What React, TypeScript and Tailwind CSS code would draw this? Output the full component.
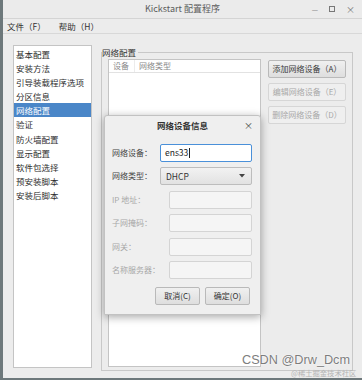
import React from "react";

const font = "font-[family-name:'Noto_Sans_CJK_SC','DejaVu_Sans',sans-serif]";

const navItems = [
  "基本配置",
  "安装方法",
  "引导装载程序选项",
  "分区信息",
  "网络配置",
  "验证",
  "防火墙配置",
  "显示配置",
  "软件包选择",
  "预安装脚本",
  "安装后脚本",
];

function SideButton({ label, disabled }: { label: string; disabled?: boolean }) {
  return (
    <div
      className={
        disabled
          ? "h-[18px] w-[78px] flex items-center justify-center rounded-[2px] border border-[#d6d6d6] bg-[#efefef] text-[#a9a9a9]"
          : "h-[18px] w-[78px] flex items-center justify-center rounded-[2px] border border-[#b9b9b9] bg-gradient-to-b from-[#f0f0f0] to-[#dedede] text-[#3a3a3a]"
      }
    >
      {label}
    </div>
  );
}

function Field({ label, w, children }: { label: string; w: string; children: React.ReactNode }) {
  return (
    <div className="flex items-center h-[18px]">
      <div className={w}>{label}</div>
      <div className="flex-1 h-full">{children}</div>
    </div>
  );
}

export default function App() {
  return (
    <div className={`relative w-[362px] h-[380px] overflow-hidden bg-[#6d787b] ${font} text-[8px] text-[#2e3436]`}>
      <div className="ml-[3px] w-[359px] h-[378px] bg-[#ececec] flex flex-col">
        {/* title bar */}
        <div className="h-[19px] shrink-0 grid grid-cols-[1fr_auto_1fr] items-center border-b border-[#d4d4d4] bg-[#ebebeb]">
          <div />
          <div className="text-[9px] text-[#5b5b5b]">Kickstart 配置程序</div>
          <div className="flex justify-end items-center gap-[11px] pr-[7px] text-[#777]">
            <span className="text-[7px] leading-none">—</span>
            <span className="w-[6px] h-[6px] border border-[#777]" />
            <span className="text-[9px] leading-none">×</span>
          </div>
        </div>
        {/* menu bar */}
        <div className="h-[15px] shrink-0 flex items-center gap-[13px] pl-[4px] border-b border-[#d8d8d8] text-[8.5px] text-[#333]">
          <span>文件（F）</span>
          <span>帮助（H）</span>
        </div>
        {/* content */}
        <div className="flex-1 flex min-h-0">
          <div className="ml-[10px] mt-[11px] w-[79px] h-[323px] border border-[#c4c4c4] bg-white py-[0.5px]">
            {navItems.map((it) => (
              <div
                key={it}
                className={
                  it === "网络配置"
                    ? "h-[14.2px] leading-[14.2px] pl-[2px] bg-[#4a86c8] text-white text-[8.5px]"
                    : "h-[14.2px] leading-[14.2px] pl-[2px] text-[8.5px] text-[#2e2e2e]"
                }
              >
                {it}
              </div>
            ))}
          </div>
          <fieldset className="ml-[9px] mt-[13px] mb-[7px] w-[247px] border border-[#c8c8c8] flex flex-col px-[6px] pb-[3px] pt-[1px] min-h-0">
            <legend className="ml-[-6px] px-0 text-[8.5px] leading-[11px] text-[#333] bg-[#ececec] pr-[2px]">网络配置</legend>
            <div className="flex flex-1 gap-[7px] min-h-0">
              <div className="w-[153px] h-full border border-[#c4c4c4] bg-white">
                <div className="h-[13px] flex items-center border-b border-[#e2e2e2] text-[#8a8a8a]">
                  <span className="pl-[4px] w-[26px] border-r border-[#ececec]">设备</span>
                  <span className="pl-[4px]">网络类型</span>
                </div>
              </div>
              <div className="flex flex-col gap-[5px] pt-[1px]">
                <SideButton label="添加网络设备（A）" />
                <SideButton label="编辑网络设备（E）" disabled />
                <SideButton label="删除网络设备（D）" disabled />
              </div>
            </div>
          </fieldset>
        </div>
      </div>

      {/* dialog */}
      <div className="absolute left-[104px] top-[115px] w-[157px] h-[200px] bg-[#efefef] border border-[#c2c2c2] rounded-t-[3px] shadow-[0_2px_8px_rgba(0,0,0,0.35)] flex flex-col">
        <div className="h-[19px] shrink-0 grid grid-cols-[1fr_auto_1fr] items-center">
          <div />
          <div className="font-bold text-[8.5px] text-[#333]">网络设备信息</div>
          <div className="flex justify-end pr-[7px] text-[9px] leading-none text-[#444]">×</div>
        </div>
        <div className="flex flex-col gap-[5.5px] pt-[8.5px] pl-[7px] pr-[8px]">
          <Field label="网络设备：" w="w-[48px] text-[#444]">
            <div className="h-full w-full rounded-[2px] border border-[#4a90d9] bg-white flex items-center pl-[4px] text-[8.5px] text-[#222]">
              ens33<span className="ml-[0.5px] w-px h-[10px] bg-[#222]" />
            </div>
          </Field>
          <Field label="网络类型：" w="w-[48px] text-[#444]">
            <div className="h-full w-full rounded-[2px] border border-[#bdbdbd] bg-gradient-to-b from-[#f2f2f2] to-[#e2e2e2] flex items-center justify-between pl-[5px] pr-[6px] text-[8.5px] text-[#333]">
              <span>DHCP</span>
              <svg width="6" height="4" viewBox="0 0 6 4"><path d="M0 0 L6 0 L3 3.5 Z" fill="#444" /></svg>
            </div>
          </Field>
          {["IP 地址：", "子网掩码：", "网关：", "名称服务器："].map((l) => (
            <Field key={l} label={l} w="w-[57px] text-[#a8a8a8]">
              <div className="h-full w-full rounded-[2px] border border-[#d4d4d4] bg-[#f5f5f5]" />
            </Field>
          ))}
          <div className="flex justify-end gap-[5px] mt-[2px] pr-[2px]">
            <div className="h-[18px] w-[45px] flex items-center justify-center rounded-[2px] border border-[#b9b9b9] bg-gradient-to-b from-[#f0f0f0] to-[#dedede] text-[#333]">取消(C)</div>
            <div className="h-[18px] w-[45px] flex items-center justify-center rounded-[2px] border border-[#b9b9b9] bg-gradient-to-b from-[#f0f0f0] to-[#dedede] text-[#333]">确定(O)</div>
          </div>
        </div>
      </div>

      {/* watermark */}
      <div className="absolute left-[242px] top-[353px] text-[12.7px] leading-[14px] text-[#7d7d7d] font-[family-name:'Liberation_Sans',sans-serif] [text-shadow:0_0_2px_#fff,0_0_1px_#fff]">
        CSDN @Drw_Dcm
      </div>
      <div className="absolute left-[291px] top-[369px] text-[7.3px] leading-[8px] text-[#b4b4b4]">
        @稀土掘金技术社区
      </div>
    </div>
  );
}
